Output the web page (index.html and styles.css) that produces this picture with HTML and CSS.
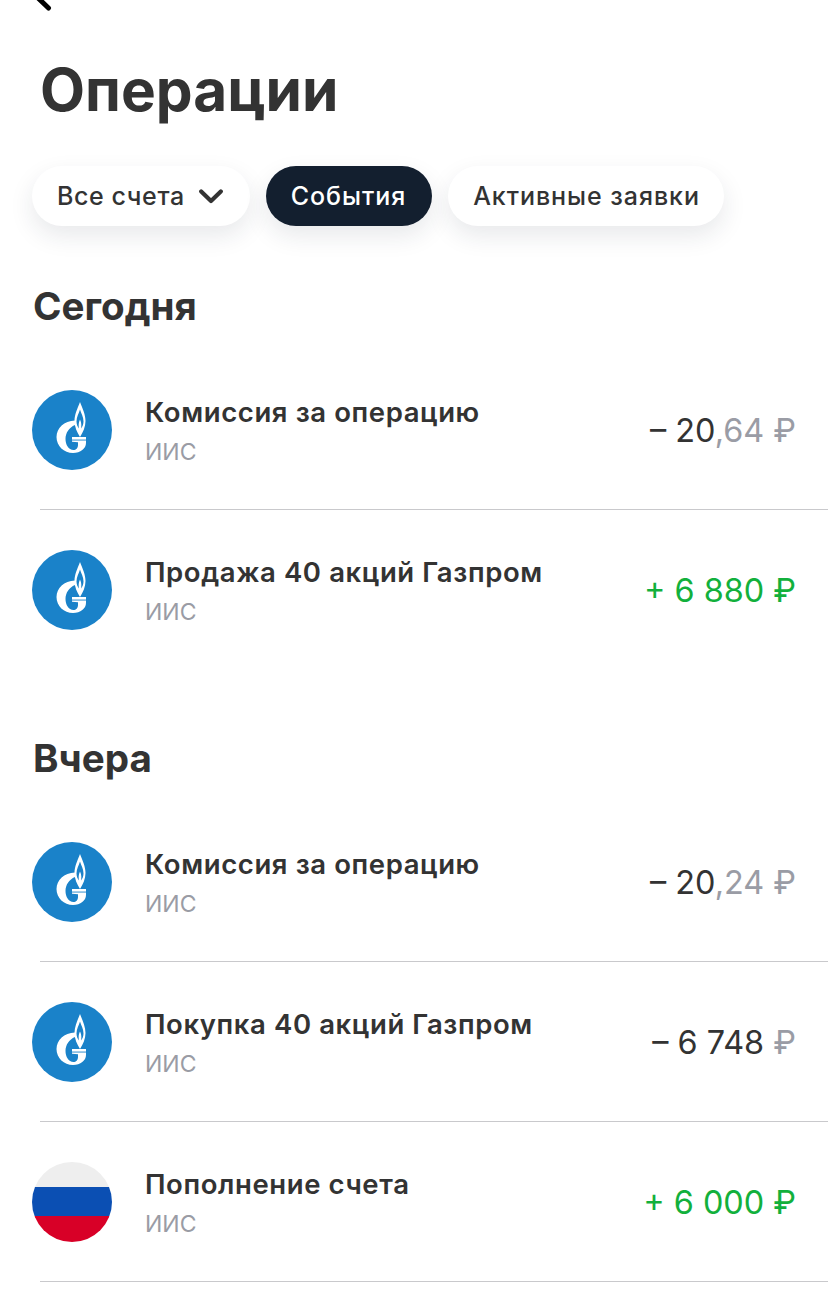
FILE: index.html
```html
<!DOCTYPE html>
<html lang="ru">
<head>
<meta charset="utf-8">
<title>Операции</title>
<link rel="stylesheet" href="styles.css">
</head>
<body>
<svg width="0" height="0" class="defs" aria-hidden="true">
  <symbol id="gazprom" viewBox="0 0 80 80">
    <circle cx="40" cy="40" r="40" fill="#1a82c9"/>
    <path fill-rule="evenodd" fill="#fff" d="M48 12C45.500 18.500 42.500 24.500 42.500 31C42.500 37 45 42 48 47C51 42 53.500 37 53.500 31C53.500 24.500 50.500 18.500 48 12ZM48 19.500C46.800 23.500 44.500 27 44.500 31.500C44.500 34.500 45.600 36.500 46.900 38.500C46.600 35.500 46.300 33 48 29.500C49.700 33 49.400 35.500 49.100 38.500C50.400 36.500 51.500 34.500 51.500 31.500C51.500 27 49.200 23.500 48 19.500Z"/>
    <path fill="#fff" d="M43 30.500C32 31 24.500 38 24.500 47C24.500 56 32 63 41 63C48.500 63 54 58.500 54 53L54 50.500L40 50.500L40 51.800L46 52.300L46 55C46 58 44 60 41.500 60C36.500 60 33.500 54.500 33.500 49C33.500 43 37 37.500 43 35Z"/>
    <path fill="#fff" d="M40 47H54V49.600H40Z"/>
  </symbol>
</svg>
<main class="page">
  <svg class="back" width="22" height="12" viewBox="0 0 22 12" aria-hidden="true"><path d="M6 -4L18.500 8" fill="none" stroke="#000" stroke-width="5" stroke-linecap="round"/></svg>
  <h1 class="title">Операции</h1>
  <div class="chips">
    <button class="chip">Все счета
      <svg class="chev" width="24" height="15" viewBox="0 0 24 15" aria-hidden="true"><path d="M2.200 2.500L12 12L21.800 2.500" fill="none" stroke="#333" stroke-width="4.200" stroke-linecap="round" stroke-linejoin="round"/></svg>
    </button>
    <button class="chip chip-wide chip-dark">События</button>
    <button class="chip chip-wide">Активные заявки</button>
  </div>

  <section class="day">
    <h2 class="day-title">Сегодня</h2>
    <div class="row">
      <svg class="logo"><use href="#gazprom"/></svg>
      <div class="info"><div class="name">Комиссия за операцию</div><div class="sub">ИИС</div></div>
      <div class="amount">– 20<span class="dim">,64 ₽</span></div>
    </div>
    <div class="divider"></div>
    <div class="row">
      <svg class="logo"><use href="#gazprom"/></svg>
      <div class="info"><div class="name">Продажа 40 акций Газпром</div><div class="sub">ИИС</div></div>
      <div class="amount plus">+ 6 880 ₽</div>
    </div>
  </section>

  <section class="day day-next">
    <h2 class="day-title">Вчера</h2>
    <div class="row">
      <svg class="logo"><use href="#gazprom"/></svg>
      <div class="info"><div class="name">Комиссия за операцию</div><div class="sub">ИИС</div></div>
      <div class="amount">– 20<span class="dim">,24 ₽</span></div>
    </div>
    <div class="divider"></div>
    <div class="row">
      <svg class="logo"><use href="#gazprom"/></svg>
      <div class="info"><div class="name">Покупка 40 акций Газпром</div><div class="sub">ИИС</div></div>
      <div class="amount">– 6 748 <span class="dim">₽</span></div>
    </div>
    <div class="divider"></div>
    <div class="row">
      <div class="flag"><span class="w"></span><span class="b"></span><span class="r"></span></div>
      <div class="info"><div class="name">Пополнение счета</div><div class="sub">ИИС</div></div>
      <div class="amount plus">+ 6 000 ₽</div>
    </div>
    <div class="divider"></div>
  </section>
</main>
</body>
</html>
```
FILE: styles.css
```css
* { box-sizing: border-box; }
html, body { margin: 0; padding: 0; background: #fff; }
body { font-family: Inter, "Noto Sans", sans-serif; color: #333; height: 1295px; overflow: hidden; }
.defs { display: block; height: 0; width: 0; }
.page { display: flex; flex-direction: column; }
.back { display: block; margin-left: 30px; }
.title { margin: 42px 0 0 40px; font-size: 58.500px; line-height: 72px; font-weight: 700; color: #333; }
.chips { display: flex; gap: 16px; padding: 40px 0 0 32px; }
.chip { display: flex; align-items: center; gap: 14px; height: 60px; padding: 0 25px; border: 0; border-radius: 30px; background: #fff; color: #333; font-family: inherit; font-size: 25px; font-weight: 500; letter-spacing: 0.6px; box-shadow: 0 10px 24px rgba(30, 40, 60, .10); }
.chip-wide { letter-spacing: 0.95px; padding-right: 24px; }
.chip-dark { background: #131f2f; color: #fff; padding: 0 26px 0 25px; }
.chev { flex: none; margin-right: 2px; }
.day { display: flex; flex-direction: column; padding-top: 56px; }
.day-next { padding-top: 65px; }
.day-title { margin: 0 0 20px 33px; font-size: 38.600px; line-height: 48px; font-weight: 700; color: #333; }
.row { display: flex; align-items: center; height: 159px; padding: 0 32px; }
.logo { flex: none; width: 80px; height: 80px; }
.flag { flex: none; width: 80px; height: 80px; border-radius: 50%; overflow: hidden; display: flex; flex-direction: column; }
.flag .w { height: 25px; background: #eeeeee; }
.flag .b { height: 29px; background: #0b4fb3; }
.flag .r { height: 26px; background: #d80027; }
.info { flex: 1; margin-left: 33px; padding-top: 5px; display: flex; flex-direction: column; gap: 8px; }
.name { font-size: 27.500px; line-height: 32px; font-weight: 600; letter-spacing: 0.6px; color: #333; }
.sub { font-size: 23px; line-height: 32px; color: #9a9ca5; }
.amount { padding-top: 2px; font-size: 32.400px; line-height: 40px; font-weight: 400; color: #333; white-space: nowrap; }
.dim { color: #9a9ca5; }
.plus { color: #12b03c; }
.divider { height: 1px; margin-left: 40px; background: #c9c9cc; }
```
